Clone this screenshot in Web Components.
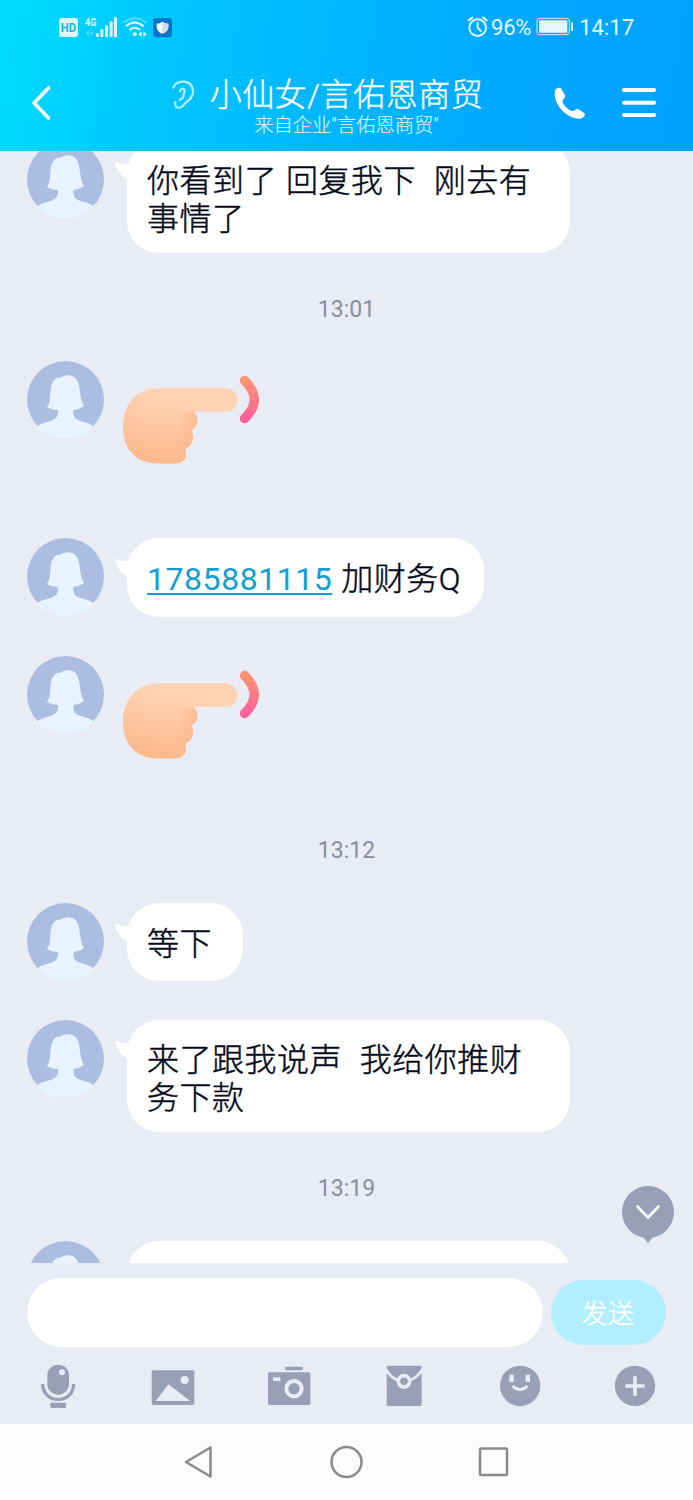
<!DOCTYPE html>
<html lang="zh-CN">
<head>
<meta charset="utf-8">
<title>Chat</title>
<style>
html,body{margin:0;padding:0}
body{width:693px;height:1500px;overflow:hidden;font-family:Roboto,"Noto Sans CJK SC",sans-serif;background:#e9ecf5}
</style>
</head>
<body>
<chat-app>
  <chat-header slot="header">小仙女/言佑恩商贸<span slot="sub">来自企业"言佑恩商贸"</span></chat-header>
  <chat-message wide>你看到了 回复我下&nbsp; 刚去有<br>事情了</chat-message>
  <chat-time>13:01</chat-time>
  <chat-sticker></chat-sticker>
  <chat-message><chat-link>1785881115</chat-link> 加财务Q</chat-message>
  <chat-sticker></chat-sticker>
  <chat-time>13:12</chat-time>
  <chat-message>等下</chat-message>
  <chat-message wide>来了跟我说声&nbsp; 我给你推财<br>务下款</chat-message>
  <chat-time>13:19</chat-time>
  <chat-message wide>&nbsp;</chat-message>
  <chat-composer slot="footer">发送</chat-composer>
  <system-nav slot="footer"></system-nav>
</chat-app>
<script>
const define = (name, html) => {
  const t = document.createElement('template');
  t.innerHTML = html;
  customElements.define(name, class extends HTMLElement {
    constructor() {
      super();
      this.attachShadow({mode: 'open'}).append(t.content.cloneNode(true));
    }
  });
};

define('chat-app', `
<style>
:host{display:flex;flex-direction:column;width:693px;height:1500px;position:relative;background:#e9ecf5}
.list{flex:1;min-height:0;overflow:hidden}
.items{display:flex;flex-direction:column;gap:39px;margin-top:-10px}
.jump{position:absolute;left:621px;top:1185px}
</style>
<slot name="header"></slot>
<div class="list"><div class="items"><slot></slot></div></div>
<slot name="footer"></slot>
<svg class="jump" width="54" height="60" viewBox="0 0 54 60"><circle cx="27" cy="27" r="26" fill="#999fb5"/><path d="M20 51Q24 53 27 58.5Q30 53 34 51Z" fill="#999fb5"/><path d="M16.500 21.500L27 32.500L37.500 21.500" fill="none" stroke="#fff" stroke-width="2.600" stroke-linecap="round"/></svg>`);

define('status-bar', `
<style>
:host{display:flex;align-items:center;height:54px;color:#e3f7ff;font-size:22px;line-height:26px}
.l{margin-left:55px;margin-right:292px;flex:none}
span{white-space:nowrap;padding-top:2px}
svg{display:block;flex:none}
.p{margin-left:2px;letter-spacing:-.2px}
.t{margin-left:5px}
.b{margin-left:5px}
</style>
<svg class="l" width="120" height="30" viewBox="165 36 360 90">
<rect x="177" y="54" width="57" height="57" rx="8" fill="#dff8ff"/>
<text x="205.500" y="96" text-anchor="middle" font-family="Roboto" font-size="36" font-weight="700" fill="#1ab4ea" textLength="46" lengthAdjust="spacingAndGlyphs">HD</text>
<text x="255" y="77" font-family="Roboto" font-size="34" font-weight="700" fill="#dff8ff" textLength="34" lengthAdjust="spacingAndGlyphs">4G</text>
<g fill="#dff8ff"><path d="M257 100l9-9v18zM280 100l-9-9v18z" opacity=".35"/><rect x="288" y="100" width="8" height="11"/><rect x="301" y="88" width="9" height="23" rx="2"/><rect x="315" y="76" width="9" height="35" rx="2"/><rect x="329" y="64" width="9" height="47" rx="2"/><rect x="342" y="52" width="9" height="59" rx="2"/></g>
<g fill="none" stroke="#dff8ff" stroke-width="6"><path d="M371 68Q405 41 439 68" opacity=".35"/><path d="M378 79Q404 56 431 79"/><path d="M388 90Q404 76 420 90"/></g>
<circle cx="404" cy="103" r="6" fill="#dff8ff"/><path d="M415 103l10-9v17zM440 103l-10-9v17z" fill="#dff8ff"/>
<rect x="459" y="54" width="57" height="58" rx="10" fill="#0574cb"/><path d="M487 65Q496 71 505 71V83Q503 95 487 101Q472 95 470 83V71Q479 71 487 65Z" fill="#f5faff"/><path d="M487 65Q496 71 505 71V83Q503 95 487 101Z" fill="#cfdcea"/>
</svg>
<svg width="22" height="24" viewBox="371 46 66 72"><g fill="none" stroke="#e3f7ff" stroke-width="6" stroke-linecap="round"><circle cx="403" cy="84" r="25"/><path d="M403 69V84L412 94M376 62L387 54M430 62L419 54"/></g></svg>
<span class="p">96%</span>
<svg class="b" width="38" height="20" viewBox="581 53 114 60"><rect x="584" y="57" width="97" height="49" rx="8" fill="none" stroke="#d2efff" stroke-width="3"/><rect x="590" y="63" width="85" height="37" rx="2" fill="#e3f7ff"/><rect x="686" y="68" width="6" height="28" rx="3" fill="#e3f7ff"/></svg>
<span class="t">14:17</span>`);

define('chat-header', `
<style>
:host{display:block;height:151px;flex:none;color:#fff;background:linear-gradient(100deg,#00dcff 0%,#00c5ff 25%,#00b5ff 50%,#00a7ff 75%,#00a1ff 100%)}
.row{display:grid;grid-template-columns:171px 38px 275px 1fr;height:97px}
svg{display:block}
.back{margin:31px 0 0 30px}.ear{margin-top:26px}
.mid{display:flex;flex-direction:column;align-items:center;padding-top:20px}
.title{font-size:32px;letter-spacing:.55px;line-height:42px;white-space:nowrap;font-weight:300;-webkit-text-stroke:.4px currentColor}
.sub{font-size:19.300px;line-height:24px;white-space:nowrap;color:#d4f5ff;margin-top:-2px;font-weight:300;-webkit-text-stroke:.2px currentColor}
.act{display:flex;padding:30px 0 0 68px;gap:34px}
</style>
<status-bar></status-bar>
<div class="row">
<svg class="back" width="22" height="36" viewBox="0 0 22 36"><path d="M18.500 3L4 18L18.500 33" fill="none" stroke="#fff" stroke-width="3.600" stroke-linecap="round" stroke-linejoin="round"/></svg>
<svg class="ear" width="24" height="30" viewBox="513 240 72 90"><g fill="none" stroke="#b3efff" stroke-width="6.500" stroke-linecap="round"><path d="M520 263C524 250 537 245 550 245C568 245 579 258 579 276C579 293 567 300 556 309C549 316 546 324 537 324C528 324 523 315 526 306"/><path d="M540 274C542 266 548 264 552 268C557 273 553 277 551 282C549 287 552 290 548 294C545 297 541 297 539 300"/></g></svg>
<div class="mid"><div class="title"><slot></slot></div><div class="sub"><slot name="sub"></slot></div></div>
<div class="act">
<svg width="36" height="38" viewBox="627 252 108 114"><path d="M635 276C636 266 647 261 654 265L666 286C668 293 659 298 658 305C662 317 676 329 688 333C695 334 698 325 705 327L724 339C728 346 722 354 712 356C672 358 632 315 635 276Z" fill="#fff"/></svg>
<svg width="34" height="38" viewBox="0 0 34 38"><path d="M2 6H32M2 18.700H32M2 31H32" stroke="#fff" stroke-width="4" stroke-linecap="round"/></svg>
</div></div>`);

define('user-avatar', `
<style>:host{display:block;width:77px;height:77px;flex:none}svg{display:block}</style>
<svg width="77" height="77" viewBox="0 0 77 77"><circle cx="38.500" cy="38.500" r="38.500" fill="#abbde1"/>
<path d="M10 65.500C15 61.500 21 61 26 59C30 57 31.500 54 31 49C27 49 23 48 20 46C23 42 23 37 23.500 30C24 22 27 16 34 16.500C39 13 47 13.500 50 19C54 26 52 37 57 45C54 47.500 50 48.500 46.500 49C46 54 47 57 51 59C56 61 62 61.500 67 65.500A38.500 38.500 0 0 1 10 65.500Z" fill="#e7f3fe"/></svg>`);

define('chat-message', `
<style>
:host{display:flex;padding-left:27px;gap:23px;align-items:flex-start}
.bubble{position:relative;box-sizing:border-box;min-width:116px;min-height:78.700px;padding:20px 23px 16px 20px;background:#fff;border-radius:32px;font-size:32px;line-height:38px;letter-spacing:.5px;word-spacing:.6px;color:#03081a;white-space:nowrap;font-weight:300;-webkit-text-stroke:.45px currentColor}
.text{padding-top:2px}
:host([wide]) .bubble{width:443px;height:112px}
:host([wide]) .text{padding-top:0;margin-top:1px}
.tail{position:absolute;left:-12px;top:20px}
</style>
<user-avatar></user-avatar>
<div class="bubble"><svg class="tail" width="16" height="20" viewBox="0 0 16 20"><path d="M0 2Q1 0 4 2Q9 4 16 2V19Q4 17 0 2Z" fill="#fff"/></svg><div class="text"><slot></slot></div></div>`);

define('chat-link', `
<style>:host{display:inline;font-weight:400;-webkit-text-stroke:0;letter-spacing:.55px;color:#12a0d3;text-decoration:underline;text-decoration-thickness:1.500px;text-underline-offset:3px;text-decoration-skip-ink:none}</style><slot></slot>`);

define('chat-time', `
<style>:host{display:block;height:30.300px;margin:2px 0 -2px;text-align:center;font-size:23px;line-height:32px;color:#898e9b}</style><slot></slot>`);

define('chat-sticker', `
<style>:host{display:flex;padding-left:27px;gap:19px;height:138px;padding-bottom:.2px}svg{display:block}</style>
<user-avatar></user-avatar>
<svg width="140" height="138" viewBox="123 361 140 138"><defs>
<linearGradient id="h" x1=".65" y1="0" x2=".35" y2="1"><stop offset=".2" stop-color="#ffd2b3"/><stop offset="1" stop-color="#fdb88c"/></linearGradient>
<linearGradient id="f" x1="0" y1="0" x2="1" y2=".3"><stop offset=".3" stop-color="#fcb78c" stop-opacity="0"/><stop offset="1" stop-color="#fcb78c" stop-opacity=".8"/></linearGradient>
<linearGradient id="a" x1="0" y1="0" x2="0" y2="1"><stop offset="0" stop-color="#ff9373"/><stop offset="1" stop-color="#ff6299"/></linearGradient></defs>
<path d="M160 388.300H227A11.800 11.800 0 0 1 227 411.800H193C199 416 199 428 191 430C195 436 193 446 185 449C188 457 184 463.500 176 463.500H158C134 463.500 123 447 123 427C123 404 136 388.300 160 388.300Z" fill="url(#h)"/>
<path d="M170 412H193C199 416 199 428 191 430C195 436 193 446 185 449C187 454 186 458 184 460Q166 440 170 412Z" fill="url(#f)"/>
<path d="M244.500 380.500Q264 399.500 244.500 418.500" fill="none" stroke="url(#a)" stroke-width="9.500" stroke-linecap="round"/></svg>`);

define('chat-composer', `
<style>
:host{display:block;box-sizing:border-box;height:161px;flex:none;padding-top:15px;background:#e9ecf5}
.entry{display:flex;align-items:center;gap:8px;padding-left:27px}
.input{width:516px;height:69px;border-radius:35px;background:#fff}
.send{width:115px;height:65px;border-radius:33px;background:#b2effe;color:#fff;font-size:26px;line-height:68px;letter-spacing:.5px;text-align:center;font-weight:300;-webkit-text-stroke:.3px currentColor;text-indent:-1px}
.tools{display:grid;grid-template-columns:repeat(6,1fr);justify-items:center;margin-top:17px}
svg{display:block;fill:#999fb5}
</style>
<div class="entry"><div class="input"></div><div class="send"><slot></slot></div></div>
<div class="tools">
<svg width="44" height="44" viewBox="107 402 132 132"><rect x="141" y="404" width="65" height="90" rx="32"/><circle cx="185" cy="427" r="9" fill="#e9ecf5"/><path d="M127 462C128 524 219 524 220 462" fill="none" stroke="#999fb5" stroke-width="10"/><rect x="150" y="518" width="47" height="16" rx="3"/></svg>
<svg width="44" height="44" viewBox="454 402 132 132"><rect x="456" y="421" width="128" height="104" rx="5"/><circle cx="555" cy="450" r="12" fill="#e9ecf5"/><path d="M468 513L506 463L572 513Z" fill="#e9ecf5"/></svg>
<svg width="44" height="44" viewBox="800 402 132 132"><rect x="855" y="410" width="52" height="11" rx="2"/><rect x="803" y="427" width="127" height="98" rx="5"/><rect x="818" y="442" width="22" height="11" fill="#e9ecf5"/><circle cx="881" cy="476" r="23" fill="none" stroke="#e9ecf5" stroke-width="12"/></svg>
<svg width="44" height="44" viewBox="118 582 132 132"><rect x="132" y="587" width="105" height="121" rx="5"/><path d="M129 597Q144 622 164 630M240 597Q224 622 204 630" fill="none" stroke="#e9ecf5" stroke-width="8"/><path d="M129 600L134 598L136 610L129 612ZM240 600L235 598L233 610L240 612Z" fill="#e9ecf5"/><circle cx="184" cy="634" r="17" stroke="#e9ecf5" stroke-width="11"/></svg>
<svg width="44" height="44" viewBox="464 582 132 132"><circle cx="530.500" cy="647.500" r="60.500"/><path d="M498 614H511V636H498ZM547 614H560V636H547Z" fill="#e9ecf5"/><path d="M508 648Q530 670 552 648" fill="none" stroke="#e9ecf5" stroke-width="9"/></svg>
<svg width="44" height="44" viewBox="811 582 132 132"><circle cx="877" cy="647.500" r="60.500"/><path d="M848 648H906M877 619V677" stroke="#e9ecf5" stroke-width="11"/></svg>
</div>`);

define('system-nav', `
<style>:host{display:flex;flex:none;box-sizing:border-box;height:76px;background:#fcfcfc;align-items:center;justify-content:center;gap:107px}svg{display:block;fill:none;stroke:#8a8a8a;stroke-width:2.500}</style>
<svg width="40" height="40" viewBox="0 0 40 40"><path d="M6 20L30.500 5.500V34.500Z" stroke-linejoin="round"/></svg>
<svg width="40" height="40" viewBox="0 0 40 40"><circle cx="19.500" cy="20" r="15"/></svg>
<svg width="40" height="40" viewBox="0 0 40 40"><rect x="6" y="6.500" width="27" height="26.500" rx="1"/></svg>`);
</script>
</body>
</html>
